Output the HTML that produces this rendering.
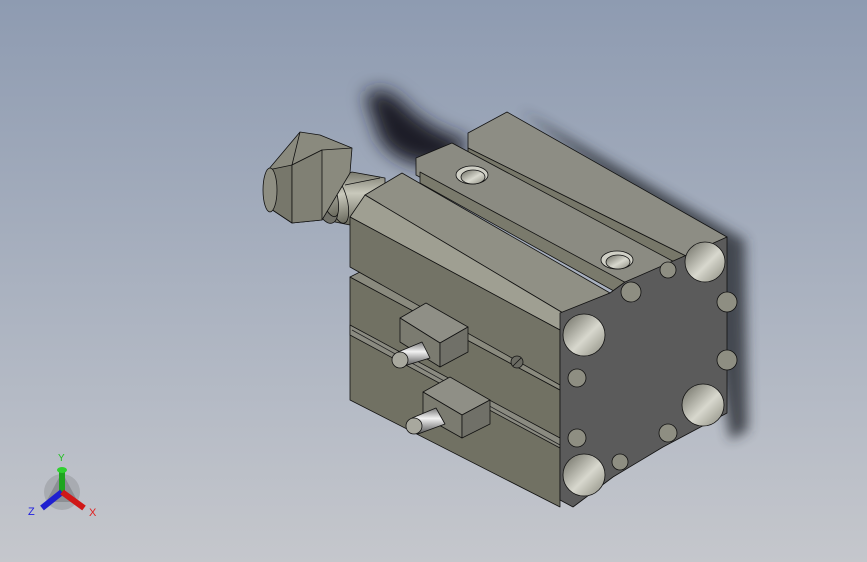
<!DOCTYPE html>
<html><head><style>
html,body{margin:0;padding:0;width:867px;height:562px;overflow:hidden}
body{background:linear-gradient(#8e9bb1,#b4bac5 70%,#c5c7cc)}
</style></head><body>
<svg width="867" height="562" viewBox="0 0 867 562" xmlns="http://www.w3.org/2000/svg" style="position:absolute;left:0;top:0">
<defs>
<filter id="b" x="-50%" y="-50%" width="200%" height="200%"><feGaussianBlur stdDeviation="9"/></filter>
<filter id="b2" x="-50%" y="-50%" width="200%" height="200%"><feGaussianBlur stdDeviation="6"/></filter>
<linearGradient id="hole" x1="0" y1="0" x2="1" y2="1"><stop offset="0" stop-color="#6a6a60"/><stop offset="0.55" stop-color="#d8d8ce"/><stop offset="1" stop-color="#8a8a7e"/></linearGradient>
<linearGradient id="pin" x1="0" y1="0" x2="0" y2="1"><stop offset="0" stop-color="#777"/><stop offset="0.4" stop-color="#f2f2f2"/><stop offset="1" stop-color="#555"/></linearGradient>
<linearGradient id="rod" x1="0" y1="0" x2="0" y2="1"><stop offset="0" stop-color="#7a7a6e"/><stop offset="0.4" stop-color="#c9c9bc"/><stop offset="1" stop-color="#6a6a5e"/></linearGradient>
</defs>
<path d="M365 95 Q385 80 410 110 Q440 135 470 140 L450 165 Q400 170 380 140 Z" fill="#1c1f26" filter="url(#b)"/>
<path d="M520 110 L745 240 L748 430 L730 440 L700 250 Z" fill="#2a2e36" filter="url(#b2)" opacity="0.8"/>
<g stroke="#111" stroke-width="0.8" stroke-linejoin="round">
<!-- rod -->
<path d="M335 178 L352 172 L385 178 L385 205 L350 225 L335 222 Z" fill="url(#rod)"/>
<ellipse cx="338" cy="200" rx="9" ry="24" fill="url(#rod)" transform="rotate(-15 338 200)"/>
<path d="M345 185 L380 178" fill="none"/>
<!-- washer -->
<ellipse cx="320" cy="185" rx="14" ry="40" fill="#707068" transform="rotate(-18 320 185)"/>
<ellipse cx="326" cy="188" rx="9" ry="30" fill="url(#rod)" transform="rotate(-18 326 188)"/>
<!-- nut -->
<path d="M268 170 L300 132 L320 135 L352 148 L350 173 L322 220 L292 223 L268 207 Z" fill="#8a8a7e"/>
<path d="M268 170 L292 165 L292 223 L268 207 Z" fill="#77776b"/>
<path d="M292 165 L322 150 L352 148 M292 165 L300 132" fill="none"/>
<path d="M292 165 L322 150 L322 220 L292 223 Z" fill="#808074"/>
<ellipse cx="270" cy="190" rx="7" ry="22" fill="#8e8e82"/>
<!-- lower body left side bands -->
<path d="M350 277 L560 390 L560 507 L350 400 Z" fill="#717163"/>
<path d="M350 277 L360 272 L560 380 L560 390 Z" fill="#8a8a7e"/>
<path d="M350 325 L560 438 L560 448 L350 335 Z" fill="#8a8a80"/>
<path d="M352 330 L560 445" stroke="#222"/>
<!-- back rail top -->
<path d="M468 133 L507 112 L727 237 L690 258 L468 148 Z" fill="#8d8d84"/>
<path d="M468 148 L690 258 L690 270 L468 158 Z" fill="#777769"/>
<!-- middle slab -->
<path d="M416 158 L452 143 L680 265 L630 292 L416 175 Z" fill="#8b8b82"/>
<path d="M420 172 L630 285 L630 300 L420 183 Z" fill="#7a7a6c"/>
<!-- front block -->
<path d="M365 195 L402 173 L610 293 L563 313 Z" fill="#909085"/>
<path d="M350 217 L365 195 L563 313 L560 330 Z" fill="#9f9f92"/>
<path d="M350 217 L560 330 L560 385 L350 267 Z" fill="#737366"/>
<!-- front dark face -->
<path d="M560 313 L610 293 L625 282 L680 258 L727 237 L727 413 L663 447 L613 477 L573 507 L560 500 Z" fill="#5b5b5b"/>
<circle cx="631" cy="292" r="10" fill="#8e8e82"/>
<circle cx="668" cy="270" r="8" fill="#8e8e82"/>
<circle cx="727" cy="302" r="10" fill="#8e8e82"/>
<circle cx="727" cy="360" r="10" fill="#8e8e82"/>
<circle cx="577" cy="378" r="9" fill="#8e8e82"/>
<circle cx="577" cy="438" r="9" fill="#8e8e82"/>
<circle cx="668" cy="433" r="9" fill="#8e8e82"/>
<circle cx="620" cy="462" r="8" fill="#8e8e82"/>
<circle cx="584" cy="335" r="21" fill="url(#hole)"/>
<circle cx="705" cy="262" r="20" fill="url(#hole)"/>
<circle cx="703" cy="405" r="21" fill="url(#hole)"/>
<circle cx="584" cy="475" r="21" fill="url(#hole)"/>
<ellipse cx="472" cy="175" rx="16" ry="9" fill="#d0d0c6"/>
<ellipse cx="473" cy="177" rx="12" ry="7" fill="url(#hole)"/>
<ellipse cx="617" cy="260" rx="16" ry="9" fill="#d0d0c6"/>
<ellipse cx="618" cy="262" rx="12" ry="7" fill="url(#hole)"/>
<circle cx="517" cy="362" r="6" fill="#6a6a62"/>
<path d="M513 366 L521 358"/>
<!-- sensor 1 -->
<path d="M400 318 L426 303 L468 327 L440 343 Z" fill="#8f8f86"/>
<path d="M400 318 L440 343 L440 367 L400 342 Z" fill="#7b7b70"/>
<path d="M440 343 L468 327 L468 352 L440 367 Z" fill="#707068"/>
<path d="M398 352 L422 342 L430 358 L404 366 Z" fill="url(#pin)"/>
<ellipse cx="400" cy="360" rx="8" ry="8" fill="#a8a89e"/>
<!-- sensor 2 -->
<path d="M423 392 L450 377 L490 400 L462 415 Z" fill="#8f8f86"/>
<path d="M423 392 L462 415 L462 438 L423 416 Z" fill="#7b7b70"/>
<path d="M462 415 L490 400 L490 424 L462 438 Z" fill="#707068"/>
<path d="M412 418 L436 408 L445 424 L418 434 Z" fill="url(#pin)"/>
<ellipse cx="414" cy="426" rx="8" ry="8" fill="#a8a89e"/>
</g>
<g>
<circle cx="62" cy="492" r="18" fill="#9a9ca2" opacity="0.6"/>
<path d="M62 472 L78 502 L46 502 Z" fill="#7a7c80" opacity="0.6"/>
<rect x="59" y="470" width="6" height="22" fill="#1ea51e"/>
<ellipse cx="62" cy="470" rx="5" ry="3" fill="#2fd02f"/>
<path d="M62 492 L42 508" stroke="#2020d0" stroke-width="6"/>
<path d="M62 492 L84 508" stroke="#d01818" stroke-width="6"/>
<text x="58" y="461" font-family="Liberation Sans,sans-serif" font-size="10" fill="#20c020">Y</text>
<text x="28" y="515" font-family="Liberation Sans,sans-serif" font-size="11" fill="#2020e0">Z</text>
<text x="89" y="516" font-family="Liberation Sans,sans-serif" font-size="11" fill="#e02020">X</text>
</g>
</svg>
</body></html>
